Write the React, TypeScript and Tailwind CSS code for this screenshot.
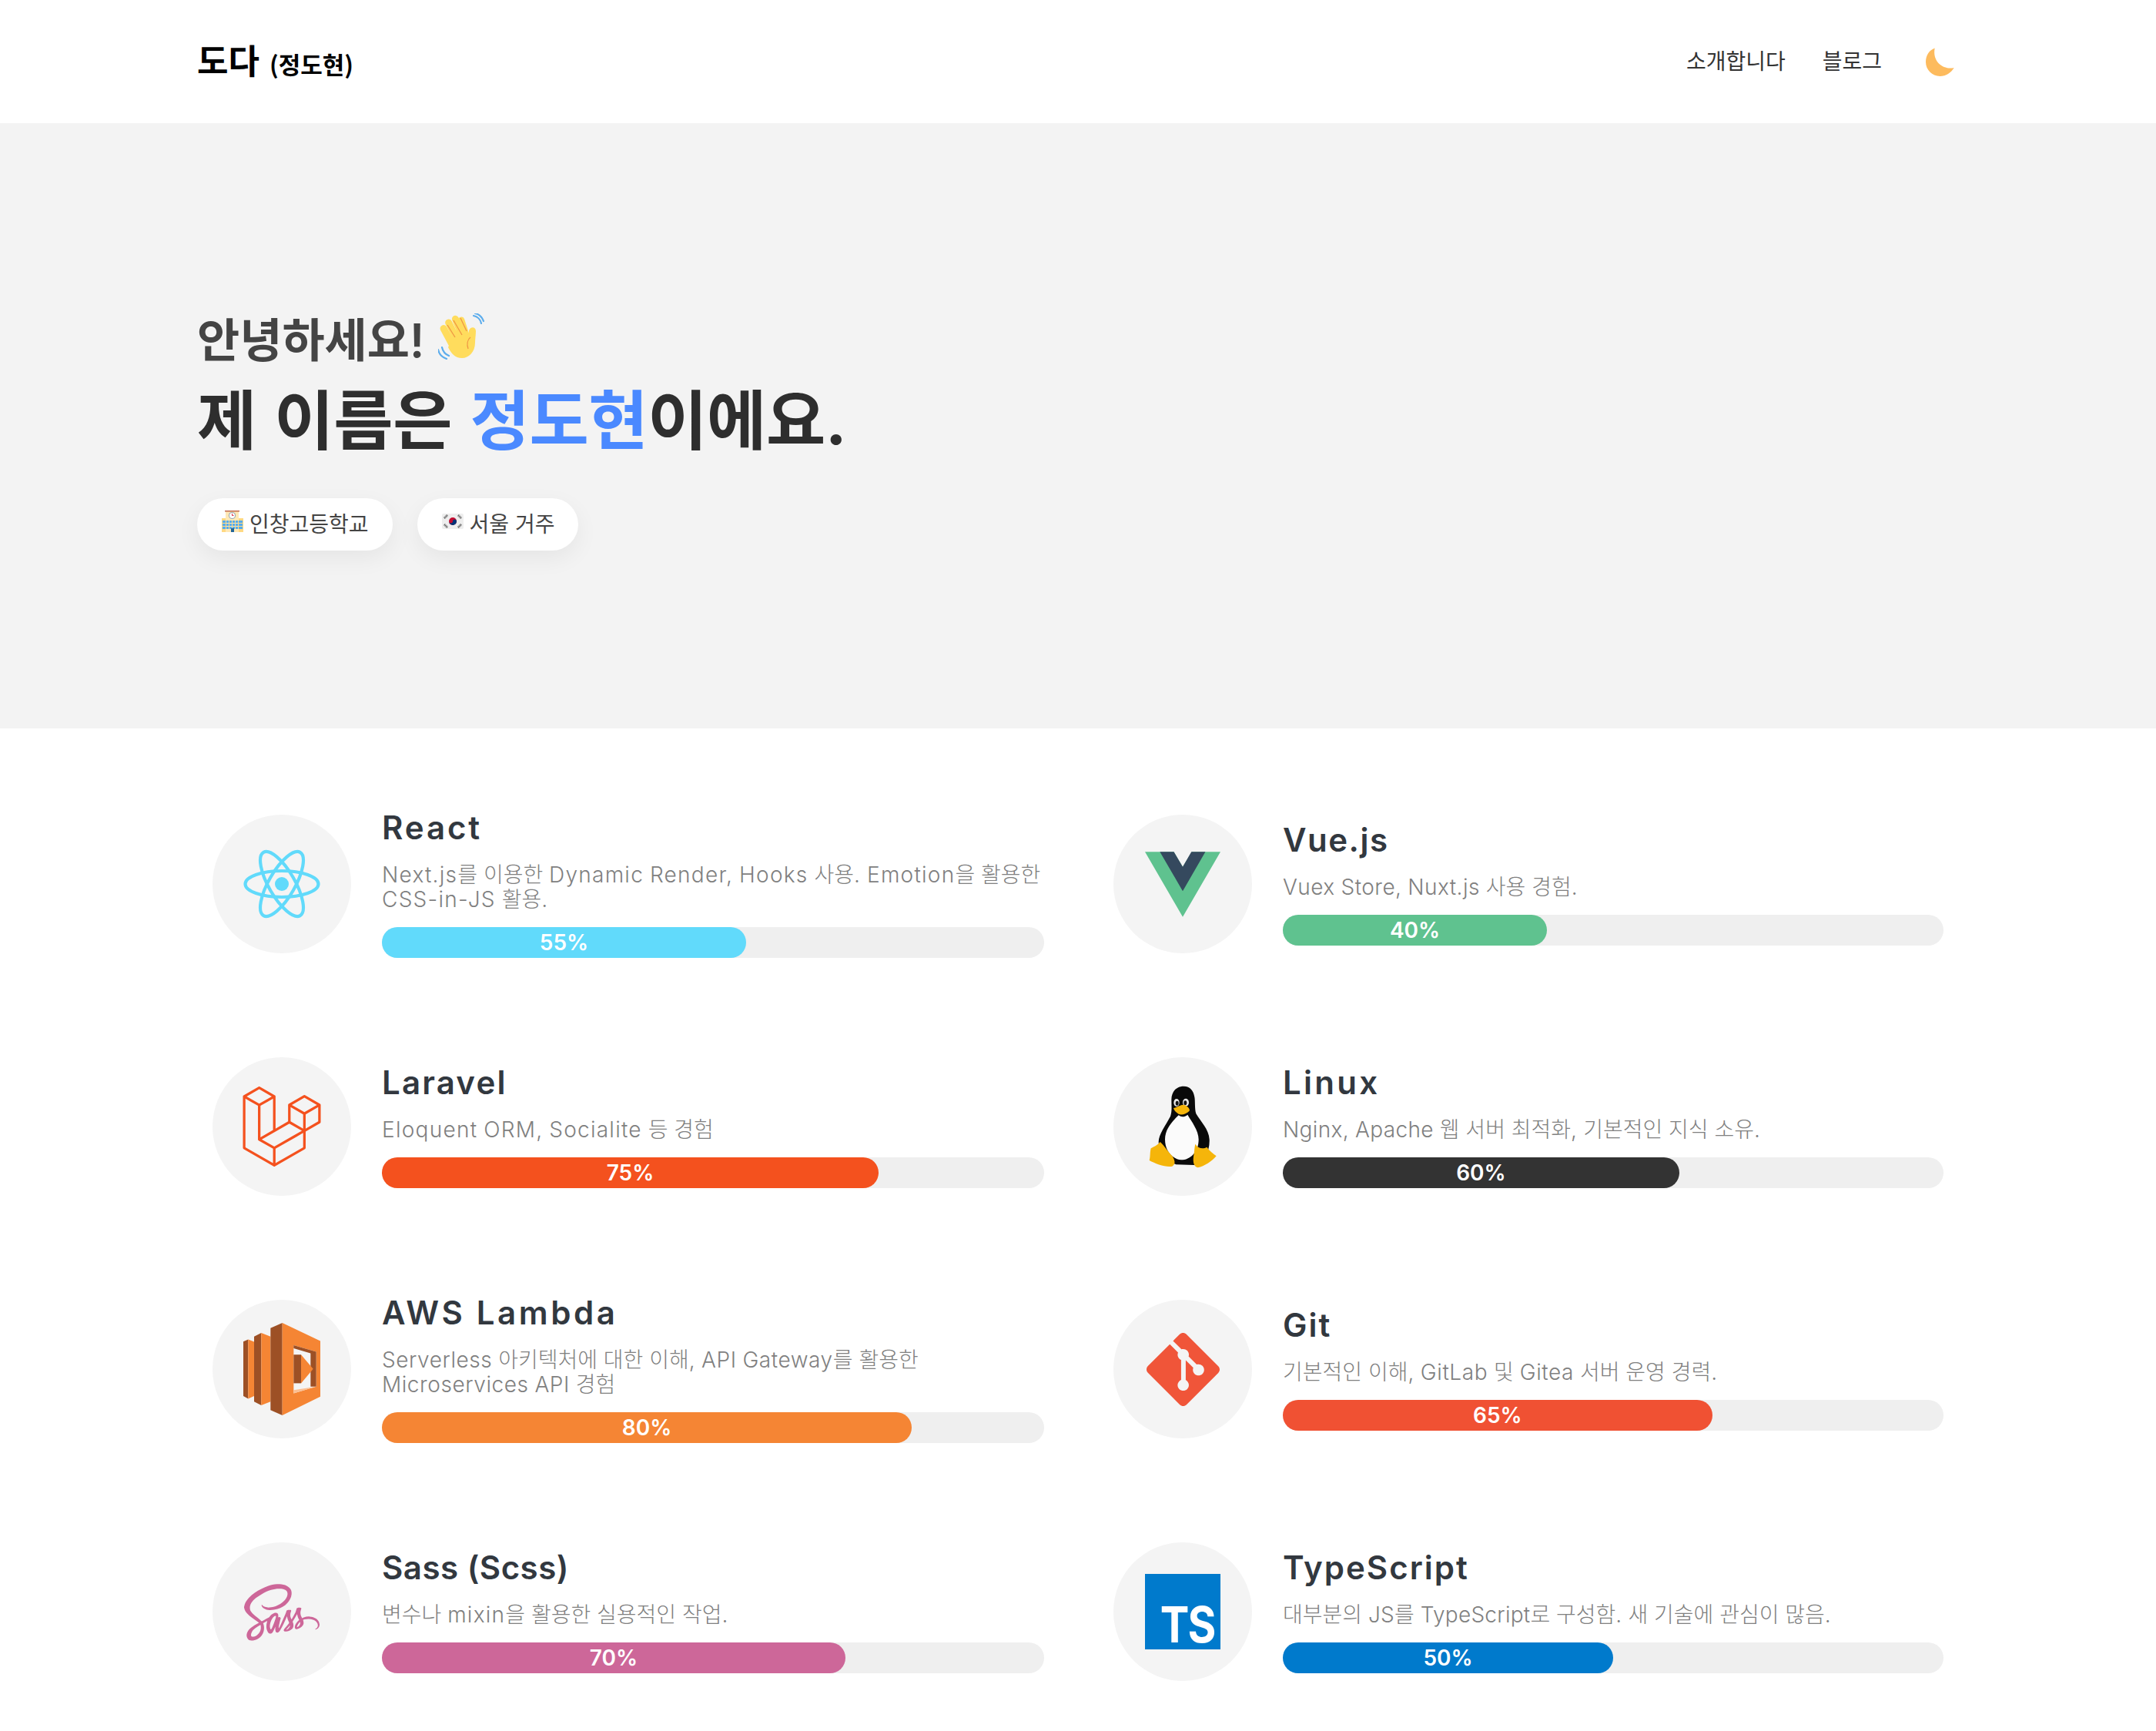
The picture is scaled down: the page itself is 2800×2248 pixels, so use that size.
import React from "react";
import { SiLaravel, SiGit } from "react-icons/si";
import { DiSass } from "react-icons/di";

function Mixed({ text, track }: { text: string; track: string }) {
  const parts = text.split(/([A-Za-z0-9.,\-]+)/).filter(Boolean);
  return (
    <>
      {parts.map((p, i) =>
        /^[A-Za-z0-9.,\-]+$/.test(p) ? (
          <span key={i} className={track}>
            {p}
          </span>
        ) : (
          <span key={i}>{p}</span>
        )
      )}
    </>
  );
}

const Moon = () => (
  <svg width="37" height="37" viewBox="0 0 37 37">
    <path d="M11.7 .5C4.500 3 0 10 0 18.500C0 28.700 8.300 37 18.500 37C26 37 33 32.500 36.700 26C25 29 8 20 11.700 .5Z" fill="#fdbb5e" />
  </svg>
);

const Wave = () => (
  <svg width="60" height="60" viewBox="0 0 60 60" fill="none" className="mb-[10px]">
    <g fill="#ffdc5d">
      <rect x="8" y="14" width="9" height="34" rx="4.5" transform="rotate(-28 12 30)" />
      <rect x="15" y="6" width="9" height="36" rx="4.5" transform="rotate(-26 20 24)" />
      <rect x="23" y="2" width="9" height="36" rx="4.5" transform="rotate(-22 27 20)" />
      <rect x="30" y="4" width="8" height="32" rx="4" transform="rotate(-18 34 20)" />
      <path d="M40 22c3-6 9-4 9 1 0 5-1 10-1 15 0 12-8 20-17 20-9 0-14-6-18-14l10-22 17 6z" />
    </g>
    <path d="M12 15l10 16M20 9l11 19M29 6l8 17" stroke="#ef9645" strokeWidth="1.3" />
    <path d="M42 31c-4 3-5 9-3 15" stroke="#ef9645" strokeWidth="1.3" />
    <path d="M46 3c5 1 9 5 10 10M48 0c5 1 9 5 11 10M5 44c1 5 4 9 9 11M0 47c1 5 5 10 11 12" stroke="#5dadec" strokeWidth="2.2" strokeLinecap="round" />
  </svg>
);

const School = () => (
  <svg width="28" height="28" viewBox="0 0 28 28" className="mb-[8px]">
    <rect x="0" y="10" width="28" height="18" fill="#ffd983" />
    <rect x="5" y="0" width="17" height="28" fill="#ffe8b6" />
    <rect x="4" y="0" width="19" height="1.500" fill="#c1694f" />
    <circle cx="13.500" cy="6.500" r="4.600" fill="#99aab5" />
    <circle cx="13.500" cy="6.500" r="3.500" fill="#fff" />
    <path d="M13.500 4V6.500h2" stroke="#dd2e44" strokeWidth="1" fill="none" />
    <g fill="#55acee">
      <rect x="1" y="13" width="26" height="3" />
      <rect x="1" y="17" width="26" height="3" />
      <rect x="1" y="21" width="26" height="3" />
    </g>
    <g fill="#ffd983">
      <rect x="5" y="13" width="1" height="11" />
      <rect x="9" y="13" width="1" height="11" />
      <rect x="13" y="13" width="1" height="11" />
      <rect x="17" y="13" width="1" height="11" />
      <rect x="21" y="13" width="1" height="11" />
    </g>
    <rect x="12" y="23" width="4" height="5" fill="#269" />
  </svg>
);

const Flag = () => (
  <svg width="28" height="20" viewBox="0 0 28 20" className="mb-[8px]">
    <rect width="28" height="20" rx="2" fill="#eeeeee" />
    <circle cx="14" cy="10" r="5" fill="#c60c30" />
    <path d="M9 10a5 5 0 0 0 10 0c0-1.400-1.100-2.500-2.500-2.500S14 8.600 14 10s-1.100 2.500-2.500 2.500S9 11.400 9 10z" fill="#003478" />
    <g stroke="#555" strokeWidth="2.600" strokeDasharray="1 .6">
      <path d="M3 6l4-4M21 2l4 4M3 14l4 4M21 18l4-4" />
    </g>
  </svg>
);

const ReactLogo = () => (
  <svg width="100" height="90" viewBox="-50 -45 100 90" fill="none" stroke="#61dafb" strokeWidth="4.200">
    <ellipse rx="47.500" ry="17" />
    <ellipse rx="47.500" ry="17" transform="rotate(60)" />
    <ellipse rx="47.500" ry="17" transform="rotate(120)" />
    <circle r="9" fill="#61dafb" stroke="none" />
  </svg>
);

const VueLogo = () => (
  <svg width="98" height="87" viewBox="0 0 256 221">
    <path d="M204.800 0H256L128 220.800 0 0h97.920L128 51.200 158.720 0h46.080z" fill="#5fc28f" />
    <path d="M50.560 0L128 133.120 204.800 0h-47.360L128 51.200 97.920 0H50.560z" fill="#35495e" />
  </svg>
);

const LaravelLogo = () => <SiLaravel className="w-[104px] h-[104px] text-[#f4511e]" />;

const Tux = () => (
  <svg width="100" height="112" viewBox="166 172 300 336">
    <path d="M320 183C290 183 272 205 272 235C272 260 275 280 268 300C250 335 222 370 222 400C222 440 250 470 290 488L360 490C400 470 422 440 420 390C418 350 385 320 368 290C362 270 365 240 362 225C358 200 345 183 320 183Z" fill="#0a0a0a" />
    <path d="M300 296C275 320 247 350 247 390C247 430 270 465 310 470C345 470 378 440 378 390C378 355 350 320 335 294C322 304 310 304 300 296Z" fill="#fbfbfb" />
    <ellipse cx="292" cy="247" rx="11" ry="15" fill="#e8e8e8" />
    <ellipse cx="328" cy="246" rx="12" ry="15" fill="#e8e8e8" />
    <ellipse cx="294" cy="249" rx="6" ry="9" fill="#111" />
    <ellipse cx="326" cy="248" rx="6" ry="9" fill="#111" />
    <path d="M280 268C295 265 308 254 320 255C332 258 346 270 342 279C330 290 312 297 300 291C290 285 282 278 280 268Z" fill="#f5b50a" />
    <path d="M228 400C215 415 200 420 192 425C188 440 190 460 186 472C210 485 250 500 275 495C290 485 285 470 275 455C260 440 245 415 228 400Z" fill="#f5b50a" />
    <path d="M365 408C375 425 395 430 410 420C420 435 435 445 447 455C430 475 400 495 375 500C355 495 355 470 360 445C362 430 362 420 365 408Z" fill="#f5b50a" />
  </svg>
);

const Lambda = () => (
  <svg width="100" height="120" viewBox="168 157 300 323" preserveAspectRatio="none">
    <path d="M168 222L187 215V422L168 413Z" fill="#9d5025" />
    <path d="M187 215L210 223V413L187 422Z" fill="#f58534" />
    <path d="M210 205L238 192V445L210 432Z" fill="#9d5025" />
    <path d="M238 192L274 205V432L238 445Z" fill="#f58534" />
    <path d="M274 175L320 157V480L274 462Z" fill="#9d5025" />
    <path fillRule="evenodd" d="M320 157L468 220V415L320 480ZM364 235V403L452 380V258Z" fill="#f58534" />
    <path d="M364 235L452 258V380H430V263L364 246Z" fill="#9d5025" />
    <path d="M364 392L452 380L364 403Z" fill="#fbbf93" />
    <path d="M364 268H393V368H364Z" fill="#9d5025" />
    <path d="M393 268L440 318L393 368Z" fill="#f58534" />
  </svg>
);

const GitLogo = () => <SiGit className="w-[95px] h-[97px] text-[#f05539]" />;

const SassLogo = () => <DiSass className="w-[100px] h-[100px] text-[#cd6799]" />;

const TsLogo = () => (
  <div className="w-[98px] h-[98px] bg-[#007acc] flex items-end justify-end pr-[7px] pb-[4px]">
    <span className="text-[64px] leading-[56px] font-bold text-white tracking-[-2px] scale-x-[0.88] origin-right">TS</span>
  </div>
);

type Item = {
  name: string;
  track: string;
  desc: string;
  descTrack: string;
  pct: number;
  bar: string;
  logo: React.ReactNode;
};

const items: Item[] = [
  { name: "React", track: "tracking-[2.9px]", desc: "Next.js를 이용한 Dynamic Render, Hooks 사용. Emotion을 활용한\nCSS-in-JS 활용.", descTrack: "tracking-[1.26px]", pct: 55, bar: "bg-[#61dafb]", logo: <ReactLogo /> },
  { name: "Vue.js", track: "tracking-[1.5px]", desc: "Vuex Store, Nuxt.js 사용 경험.", descTrack: "tracking-[0.46px]", pct: 40, bar: "bg-[#5fc28f]", logo: <VueLogo /> },
  { name: "Laravel", track: "tracking-[2.2px]", desc: "Eloquent ORM, Socialite 등 경험", descTrack: "tracking-[1.26px]", pct: 75, bar: "bg-[#f4511e]", logo: <LaravelLogo /> },
  { name: "Linux", track: "tracking-[3.3px]", desc: "Nginx, Apache 웹 서버 최적화, 기본적인 지식 소유.", descTrack: "tracking-[0.36px]", pct: 60, bar: "bg-[#333333]", logo: <Tux /> },
  { name: "AWS Lambda", track: "tracking-[3.6px]", desc: "Serverless 아키텍처에 대한 이해, API Gateway를 활용한\nMicroservices API 경험", descTrack: "tracking-[0.56px]", pct: 80, bar: "bg-[#f58534]", logo: <Lambda /> },
  { name: "Git", track: "tracking-[2px]", desc: "기본적인 이해, GitLab 및 Gitea 서버 운영 경력.", descTrack: "tracking-[0.6px]", pct: 65, bar: "bg-[#f05133]", logo: <GitLogo /> },
  { name: "Sass (Scss)", track: "tracking-[0.5px]", desc: "변수나 mixin을 활용한 실용적인 작업.", descTrack: "tracking-[1.26px]", pct: 70, bar: "bg-[#cd6799]", logo: <SassLogo /> },
  { name: "TypeScript", track: "tracking-[2px]", desc: "대부분의 JS를 TypeScript로 구성함. 새 기술에 관심이 많음.", descTrack: "tracking-[0.26px]", pct: 50, bar: "bg-[#007acc]", logo: <TsLogo /> },
];

function Skill({ item }: { item: Item }) {
  return (
    <div className="flex items-center gap-[40px] px-[20px]">
      <div className="w-[180px] h-[180px] shrink-0 rounded-full bg-[#f4f4f4] flex items-center justify-center">
        {item.logo}
      </div>
      <div className="flex-1 min-w-0">
        <h3 className={`text-[42px] leading-[46px] font-semibold text-[#32383f] mb-[22px] ${item.track}`}>
          {item.name}
        </h3>
        <p className="text-[28px] leading-[32px] font-light text-[#808080] whitespace-pre mb-[20px]">
          <Mixed text={item.desc} track={item.descTrack} />
        </p>
        <div className="h-[40px] rounded-full bg-[#efefef]">
          <div
            className={`h-full rounded-full flex items-center justify-center text-white text-[28px] font-semibold ${item.bar}`}
            style={{ width: `${item.pct}%` }}
          >
            {item.pct}%
          </div>
        </div>
      </div>
    </div>
  );
}

export default function App() {
  return (
    <div className="min-h-[2248px] bg-white font-['Inter','Noto_Sans_CJK_KR',sans-serif]">
      <nav className="h-[160px] pl-[256px] pr-[262px] flex items-center justify-between">
        <div className="flex items-baseline gap-[13px] text-black font-bold">
          <span className="text-[44px] leading-none">도다</span>
          <span className="text-[31px] leading-none font-['Noto_Sans_CJK_KR',sans-serif]">(정도현)</span>
        </div>
        <div className="flex items-center text-[28px] text-[#333333]">
          <a className="mr-[48px]">소개합니다</a>
          <a className="mr-[57px]">블로그</a>
          <Moon />
        </div>
      </nav>

      <section className="h-[786px] bg-[#f3f3f3] px-[256px] pt-[16px] flex flex-col justify-center">
        <div className="flex items-center gap-[18px] h-[70px]">
          <span className="text-[60px] leading-[70px] font-semibold text-[#444444]">안녕하세요!</span>
          <Wave />
        </div>
        <h1 className="text-[84px] leading-[100px] font-bold text-[#2e2e2e] mt-[20px] tracking-[-0.4px] [word-spacing:4px]">
          제 이름은 <span className="text-[#4a89ff]">정도현</span>이에요.
        </h1>
        <div className="flex gap-[32px] mt-[50px]">
          <div className="h-[68px] pl-[32px] pr-[31px] rounded-full bg-white shadow-[0_10px_30px_rgba(0,0,0,0.06)] flex items-center gap-[8px] text-[28px] text-[#444444]">
            <School />
            <span>인창고등학교</span>
          </div>
          <div className="h-[68px] pl-[32px] pr-[31px] rounded-full bg-white shadow-[0_10px_30px_rgba(0,0,0,0.06)] flex items-center gap-[8px] text-[28px] text-[#444444]">
            <Flag />
            <span>서울 거주</span>
          </div>
        </div>
      </section>

      <section className="pl-[256px] pt-[106px]">
        <div className="grid grid-cols-[1120px_1118px] gap-x-[50px] gap-y-[129px] items-center">
          {items.map((it) => (
            <Skill key={it.name} item={it} />
          ))}
        </div>
      </section>
    </div>
  );
}
